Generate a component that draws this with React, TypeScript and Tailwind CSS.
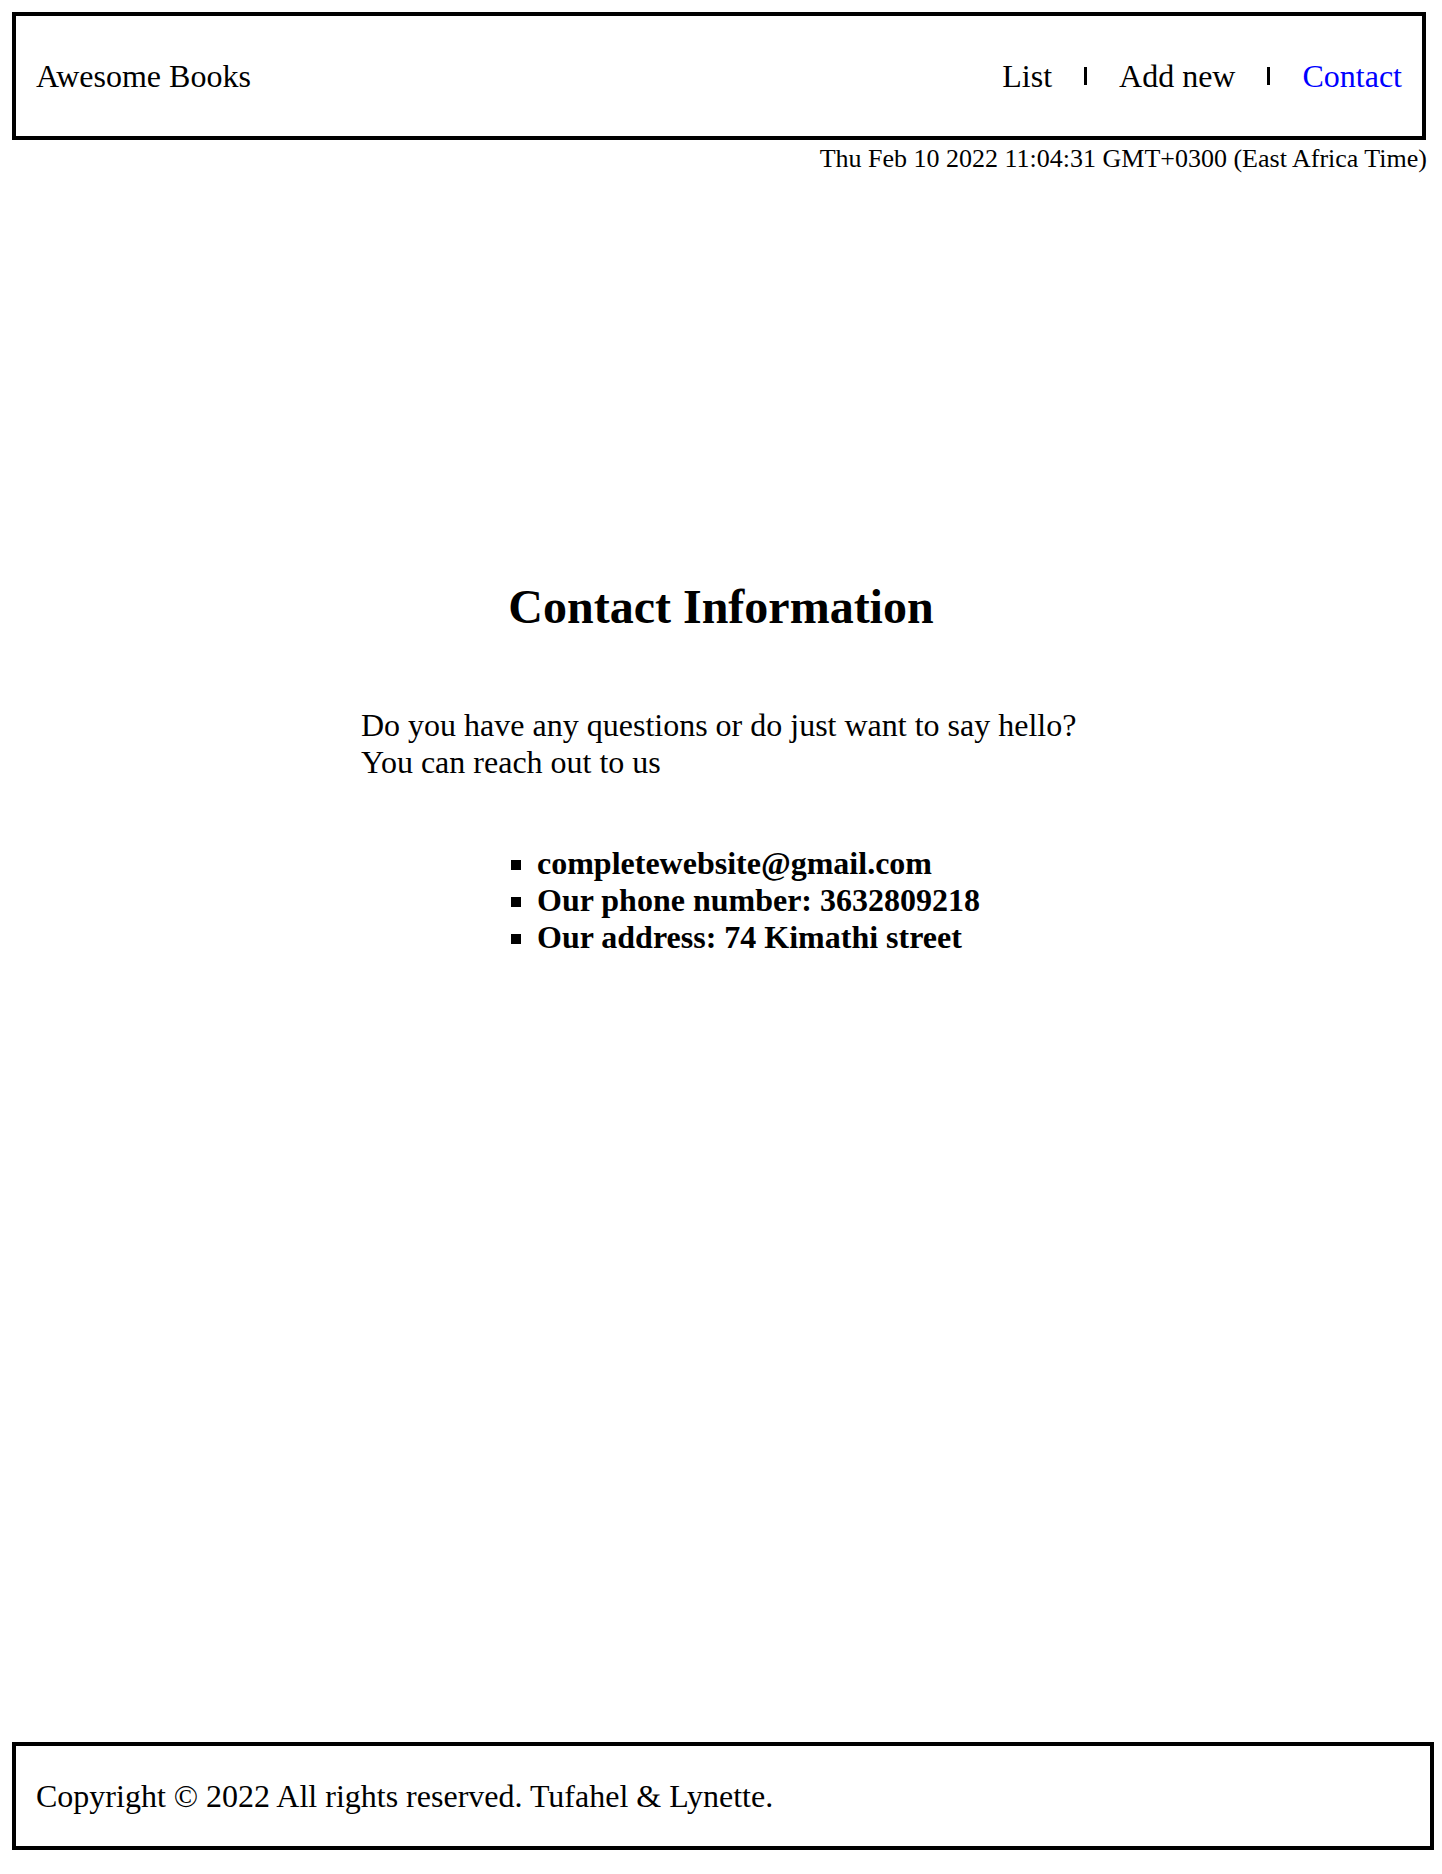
import React from 'react';

const NavBar = () => (
  <span className="inline-block w-[3px] h-[18px] bg-black"></span>
);

const App = () => {
  const contacts = [
    'completewebsite@gmail.com',
    'Our phone number: 3632809218',
    'Our address: 74 Kimathi street',
  ];

  return (
    <div className="min-h-[1874px] bg-white text-black font-['Liberation_Serif','Times_New_Roman',serif] pb-[23px]">
      <header className="ml-[12px] mt-[12px] w-[1414px] h-[128px] border-4 border-black flex items-center justify-between px-[20px] text-[32px]">
        <h2 className="font-normal">Awesome Books</h2>
        <nav className="flex items-center gap-[32px]">
          <a className="cursor-pointer">List</a>
          <NavBar />
          <a className="cursor-pointer">Add new</a>
          <NavBar />
          <a className="cursor-pointer text-[#0000ff]">Contact</a>
        </nav>
      </header>

      <p className="ml-[12px] w-[1415px] mt-[5px] text-right text-[26px] leading-[28px]">
        Thu Feb 10 2022 11:04:31 GMT+0300 (East Africa Time)
      </p>

      <section className="mt-[406px]">
        <h1 className="text-center text-[48px] leading-[56px] font-bold">Contact Information</h1>
        <div className="w-[720px] mx-auto">
          <p className="mt-[72px] text-[32px] leading-[37px]">
            Do you have any questions or do just want to say hello?
            <br />
            You can reach out to us
          </p>
          <ul className="mt-[64px] ml-[136px] pl-[40px] list-[square] text-[32px] leading-[37px] font-bold">
            {contacts.map((item, index) => (
              <li key={index}>{item}</li>
            ))}
          </ul>
        </div>
      </section>

      <footer className="mt-[786px] ml-[12px] w-[1422px] h-[108px] border-4 border-black flex items-center px-[20px] text-[32px]">
        <p>Copyright © 2022 All rights reserved. Tufahel &amp; Lynette.</p>
      </footer>
    </div>
  );
};

export default App;
